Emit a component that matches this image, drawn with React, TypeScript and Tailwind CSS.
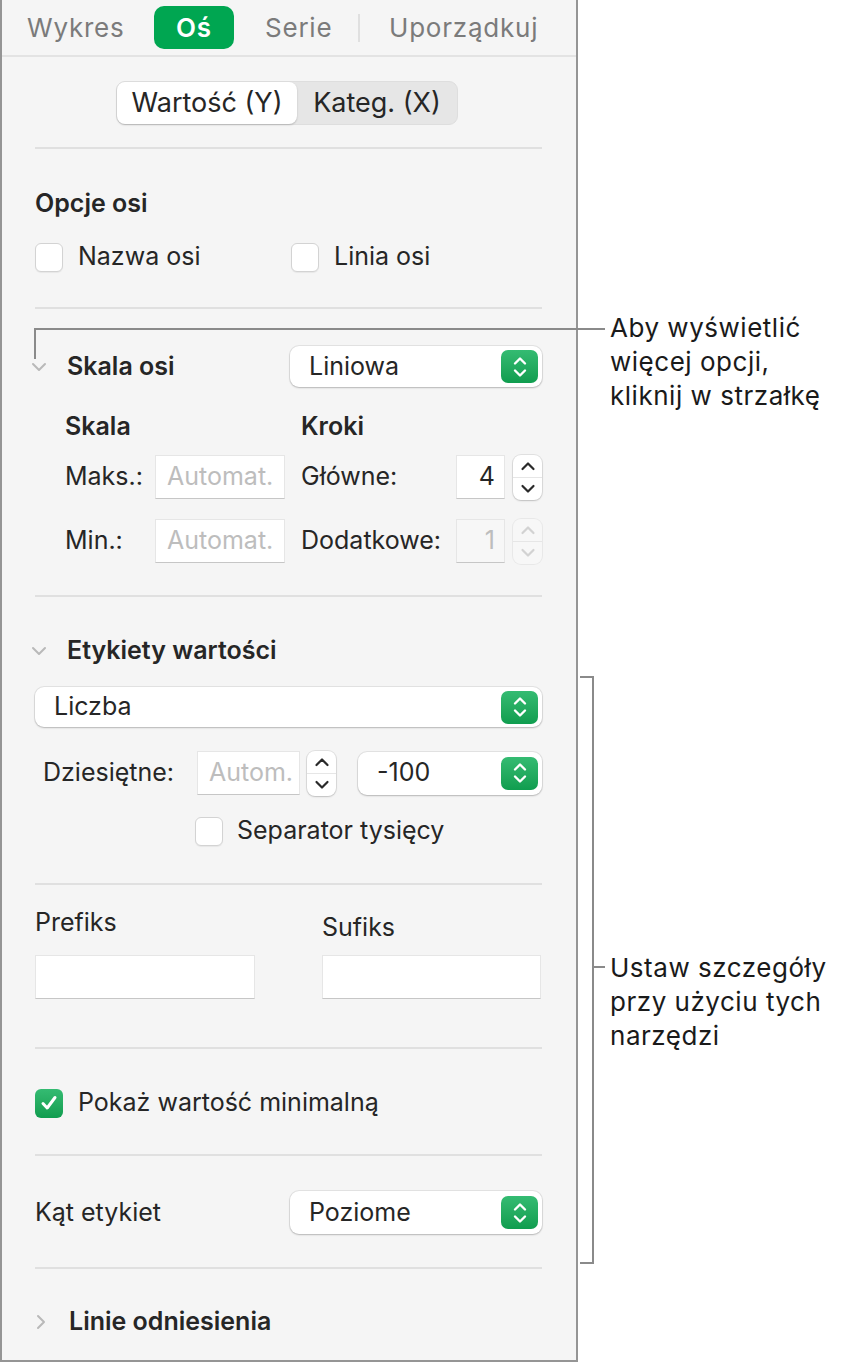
import React from "react";

const Divider = ({ className = "" }: { className?: string }) => (
  <div className={`h-[2px] bg-[#e0e0e0] ${className}`} />
);

const ChevronDown = () => (
  <svg width="16" height="10" viewBox="0 0 16 10" className="shrink-0">
    <path d="M2 2 L8 8 L14 2" stroke="#b9b9b9" strokeWidth="2" fill="none" strokeLinecap="round" strokeLinejoin="round" />
  </svg>
);

const ChevronRight = () => (
  <svg width="10" height="16" viewBox="0 0 10 16" className="shrink-0">
    <path d="M2 2 L8 8 L2 14" stroke="#b9b9b9" strokeWidth="2" fill="none" strokeLinecap="round" strokeLinejoin="round" />
  </svg>
);

const GreenStepper = () => (
  <div className="w-[37px] h-[33px] rounded-[7px] bg-linear-to-b from-[#34bb72] to-[#0f9d4f] flex items-center justify-center">
    <svg width="16" height="24" viewBox="0 0 16 24">
      <path d="M3 8.5 L8 3.5 L13 8.5" stroke="white" strokeWidth="2.4" fill="none" strokeLinecap="round" strokeLinejoin="round" />
      <path d="M3 15.5 L8 20.5 L13 15.5" stroke="white" strokeWidth="2.4" fill="none" strokeLinecap="round" strokeLinejoin="round" />
    </svg>
  </div>
);

const Popup = ({ label, className = "" }: { label: string; className?: string }) => (
  <div
    className={`bg-white rounded-[9px] shadow-[0_0_0_1px_rgba(0,0,0,0.07),0_1px_2px_rgba(0,0,0,0.2)] flex items-center justify-between pl-[19px] pr-[4px] ${className}`}
  >
    <span className="text-[25px] text-[#262626]">{label}</span>
    <GreenStepper />
  </div>
);

const SmallStepper = ({ disabled }: { disabled?: boolean }) => {
  const c = disabled ? "#d2d2d2" : "#2a2a2a";
  return (
    <div
      className={`w-[29px] h-[45px] rounded-[8px] flex flex-col ${
        disabled ? "bg-[#f7f7f7] shadow-[0_0_0_1px_rgba(0,0,0,0.05)]" : "bg-white shadow-[0_0_0_1px_rgba(0,0,0,0.08),0_1px_2px_rgba(0,0,0,0.15)]"
      }`}
    >
      <div className="flex-1 flex items-center justify-center border-b border-[#e6e6e6]">
        <svg width="16" height="10" viewBox="0 0 16 10">
          <path d="M2.5 8 L8 2.5 L13.5 8" stroke={c} strokeWidth="2.2" fill="none" strokeLinecap="round" strokeLinejoin="round" />
        </svg>
      </div>
      <div className="flex-1 flex items-center justify-center">
        <svg width="16" height="10" viewBox="0 0 16 10">
          <path d="M2.5 2 L8 7.5 L13.5 2" stroke={c} strokeWidth="2.2" fill="none" strokeLinecap="round" strokeLinejoin="round" />
        </svg>
      </div>
    </div>
  );
};

const TextField = ({ placeholder, value, disabled, className = "" }: { placeholder?: string; value?: string; disabled?: boolean; className?: string }) => (
  <div
    className={`h-[44px] border border-[#e6e6e6] border-b-[#c6c6c6] flex items-center ${disabled ? "bg-[#f7f7f7]" : "bg-white"} ${className}`}
  >
    {placeholder && <span className="pl-[11px] text-[25px] text-[#bdbdbd] whitespace-nowrap overflow-hidden">{placeholder}</span>}
    {value && <span className={`ml-auto pr-[9px] text-[25px] ${disabled ? "text-[#bdbdbd]" : "text-[#262626]"}`}>{value}</span>}
  </div>
);

const Checkbox = ({ checked }: { checked?: boolean }) =>
  checked ? (
    <div className="w-[28px] h-[29px] rounded-[6px] bg-linear-to-b from-[#34bb72] to-[#0f9d4f] flex items-center justify-center shrink-0">
      <svg width="20" height="20" viewBox="0 0 20 20">
        <path d="M4 10.5 L8.2 15 L16 4.5" stroke="white" strokeWidth="3" fill="none" strokeLinecap="round" strokeLinejoin="round" />
      </svg>
    </div>
  ) : (
    <div className="w-[28px] h-[29px] rounded-[6px] bg-white border border-[#d3d3d3] shadow-[0_1px_1px_rgba(0,0,0,0.06)] shrink-0" />
  );

export default function App() {
  return (
    <div className="relative w-[852px] h-[1362px] bg-white flex font-[Inter,'Noto_Sans',sans-serif] text-[#262626]">
      {/* inspector panel */}
      <div className="w-[578px] h-[1362px] bg-[#f5f5f5] border-l-2 border-r-2 border-b-2 border-[#959595] flex flex-col">
        {/* tabs */}
        <div className="h-[57px] border-b-2 border-[#e3e3e3] flex items-center text-[26px] tracking-[0.03em] text-[#7b7b7b] shrink-0">
          <div className="ml-[25px] w-[96px] text-center">Wykres</div>
          <div className="ml-[31px] w-[80px] h-[43px] rounded-[10px] bg-[#00a651] text-white font-semibold flex items-center justify-center">
            Oś
          </div>
          <div className="ml-[31px] w-[66px] text-center">Serie</div>
          <div className="ml-[27px] w-[2px] h-[28px] bg-[#e0e0e0]" />
          <div className="ml-[29px] w-[149px] text-center whitespace-nowrap">Uporządkuj</div>
        </div>

        <div className="pl-[33px] pr-[34px] flex flex-col text-[25px]">
          {/* segmented */}
          <div className="mt-[24px] self-center ml-[-3px] w-[342px] h-[44px] rounded-[9px] bg-[#e6e6e6] border border-[#dedede] flex items-center text-[27px]">
            <div className="w-[180px] h-[42px] rounded-[8px] bg-white shadow-[0_1px_2px_rgba(0,0,0,0.2)] flex items-center justify-center whitespace-nowrap">
              Wartość (Y)
            </div>
            <div className="flex-1 text-center whitespace-nowrap">Kateg. (X)</div>
          </div>

          <Divider className="mt-[22px]" />

          {/* Opcje osi */}
          <div className="mt-[40px] h-[30px] flex items-center font-semibold">Opcje osi</div>
          <div className="mt-[23px] h-[30px] flex items-center">
            <Checkbox />
            <span className="ml-[15px] w-[213px]">Nazwa osi</span>
            <div className="flex items-center">
              <Checkbox />
              <span className="ml-[15px]">Linia osi</span>
            </div>
          </div>

          <Divider className="mt-[35px]" />

          {/* Skala osi */}
          <div className="mt-[37px] h-[41px] flex items-center">
            <div className="ml-[-4px] w-[36px]">
              <ChevronDown />
            </div>
            <span className="font-semibold">Skala osi</span>
            <Popup label="Liniowa" className="ml-auto w-[252px] h-[41px]" />
          </div>

          <div className="mt-[25px] pl-[30px] flex">
            <div className="w-[237px] flex flex-col">
              <div className="h-[30px] flex items-center font-semibold">Skala</div>
              <div className="mt-[13px] h-[44px] flex items-center">
                <span className="w-[90px]">Maks.:</span>
                <TextField placeholder="Automat." className="w-[130px]" />
              </div>
              <div className="mt-[20px] h-[44px] flex items-center">
                <span className="w-[90px]">Min.:</span>
                <TextField placeholder="Automat." className="w-[130px]" />
              </div>
            </div>
            <div className="flex-1 flex flex-col">
              <div className="h-[30px] flex items-center font-semibold">Kroki</div>
              <div className="mt-[13px] h-[44px] flex items-center">
                <span className="w-[155px]">Główne:</span>
                <TextField value="4" className="w-[49px]" />
                <div className="ml-[8px]">
                  <SmallStepper />
                </div>
              </div>
              <div className="mt-[20px] h-[44px] flex items-center">
                <span className="w-[155px]">Dodatkowe:</span>
                <TextField value="1" disabled className="w-[49px]" />
                <div className="ml-[8px]">
                  <SmallStepper disabled />
                </div>
              </div>
            </div>
          </div>

          <Divider className="mt-[32px]" />

          {/* Etykiety wartości */}
          <div className="mt-[39px] h-[30px] flex items-center">
            <div className="ml-[-4px] w-[36px]">
              <ChevronDown />
            </div>
            <span className="font-semibold">Etykiety wartości</span>
          </div>
          <Popup label="Liczba" className="mt-[21px] h-[40px] pl-[17px]" />

          <div className="mt-[24px] h-[44px] flex items-center">
            <span className="ml-[8px] w-[154px]">Dziesiętne:</span>
            <TextField placeholder="Autom." className="w-[103px]" />
            <div className="ml-[7px]">
              <SmallStepper />
            </div>
            <Popup label="-100" className="ml-auto w-[184px] h-[43px]" />
          </div>

          <div className="mt-[21px] h-[30px] flex items-center">
            <div className="ml-[160px]">
              <Checkbox />
            </div>
            <span className="ml-[14px]">Separator tysięcy</span>
          </div>

          <Divider className="mt-[37px]" />

          {/* Prefiks / Sufiks */}
          <div className="flex">
            <div className="w-[287px] flex flex-col">
              <div className="mt-[23px] h-[30px] flex items-center">Prefiks</div>
              <TextField className="mt-[17px] w-[220px]" />
            </div>
            <div className="flex-1 flex flex-col">
              <div className="mt-[28px] h-[30px] flex items-center">Sufiks</div>
              <TextField className="mt-[12px] w-[219px]" />
            </div>
          </div>

          <Divider className="mt-[48px]" />

          <div className="mt-[39px] h-[30px] flex items-center">
            <Checkbox checked />
            <span className="ml-[15px]">Pokaż wartość minimalną</span>
          </div>

          <Divider className="mt-[36px]" />

          <div className="mt-[35px] h-[43px] flex items-center">
            <span>Kąt etykiet</span>
            <Popup label="Poziome" className="ml-auto w-[252px] h-[43px]" />
          </div>

          <Divider className="mt-[33px]" />

          <div className="mt-[38px] h-[30px] flex items-center">
            <div className="ml-[1px] w-[33px]">
              <ChevronRight />
            </div>
            <span className="font-semibold">Linie odniesienia</span>
          </div>
        </div>
      </div>

      {/* callout 1 */}
      <div className="absolute left-[34px] top-[328px] w-[571px] h-[2px] bg-[#8a8a8a]" />
      <div className="absolute left-[34px] top-[328px] w-[2px] h-[31px] bg-[#8a8a8a]" />
      <div className="absolute left-[610px] top-[311px] text-[26px] tracking-[0.02em] leading-[34px] text-[#1a1a1a]">
        Aby wyświetlić
        <br />
        więcej opcji,
        <br />
        kliknij w strzałkę
      </div>

      {/* callout 2 */}
      <div className="absolute left-[580px] top-[676px] w-[14px] h-[588px] border-t-2 border-r-2 border-b-2 border-[#8a8a8a]" />
      <div className="absolute left-[593px] top-[966px] w-[12px] h-[2px] bg-[#8a8a8a]" />
      <div className="absolute left-[610px] top-[951px] text-[26px] tracking-[0.02em] leading-[34px] text-[#1a1a1a]">
        Ustaw szczegóły
        <br />
        przy użyciu tych
        <br />
        narzędzi
      </div>
    </div>
  );
}
